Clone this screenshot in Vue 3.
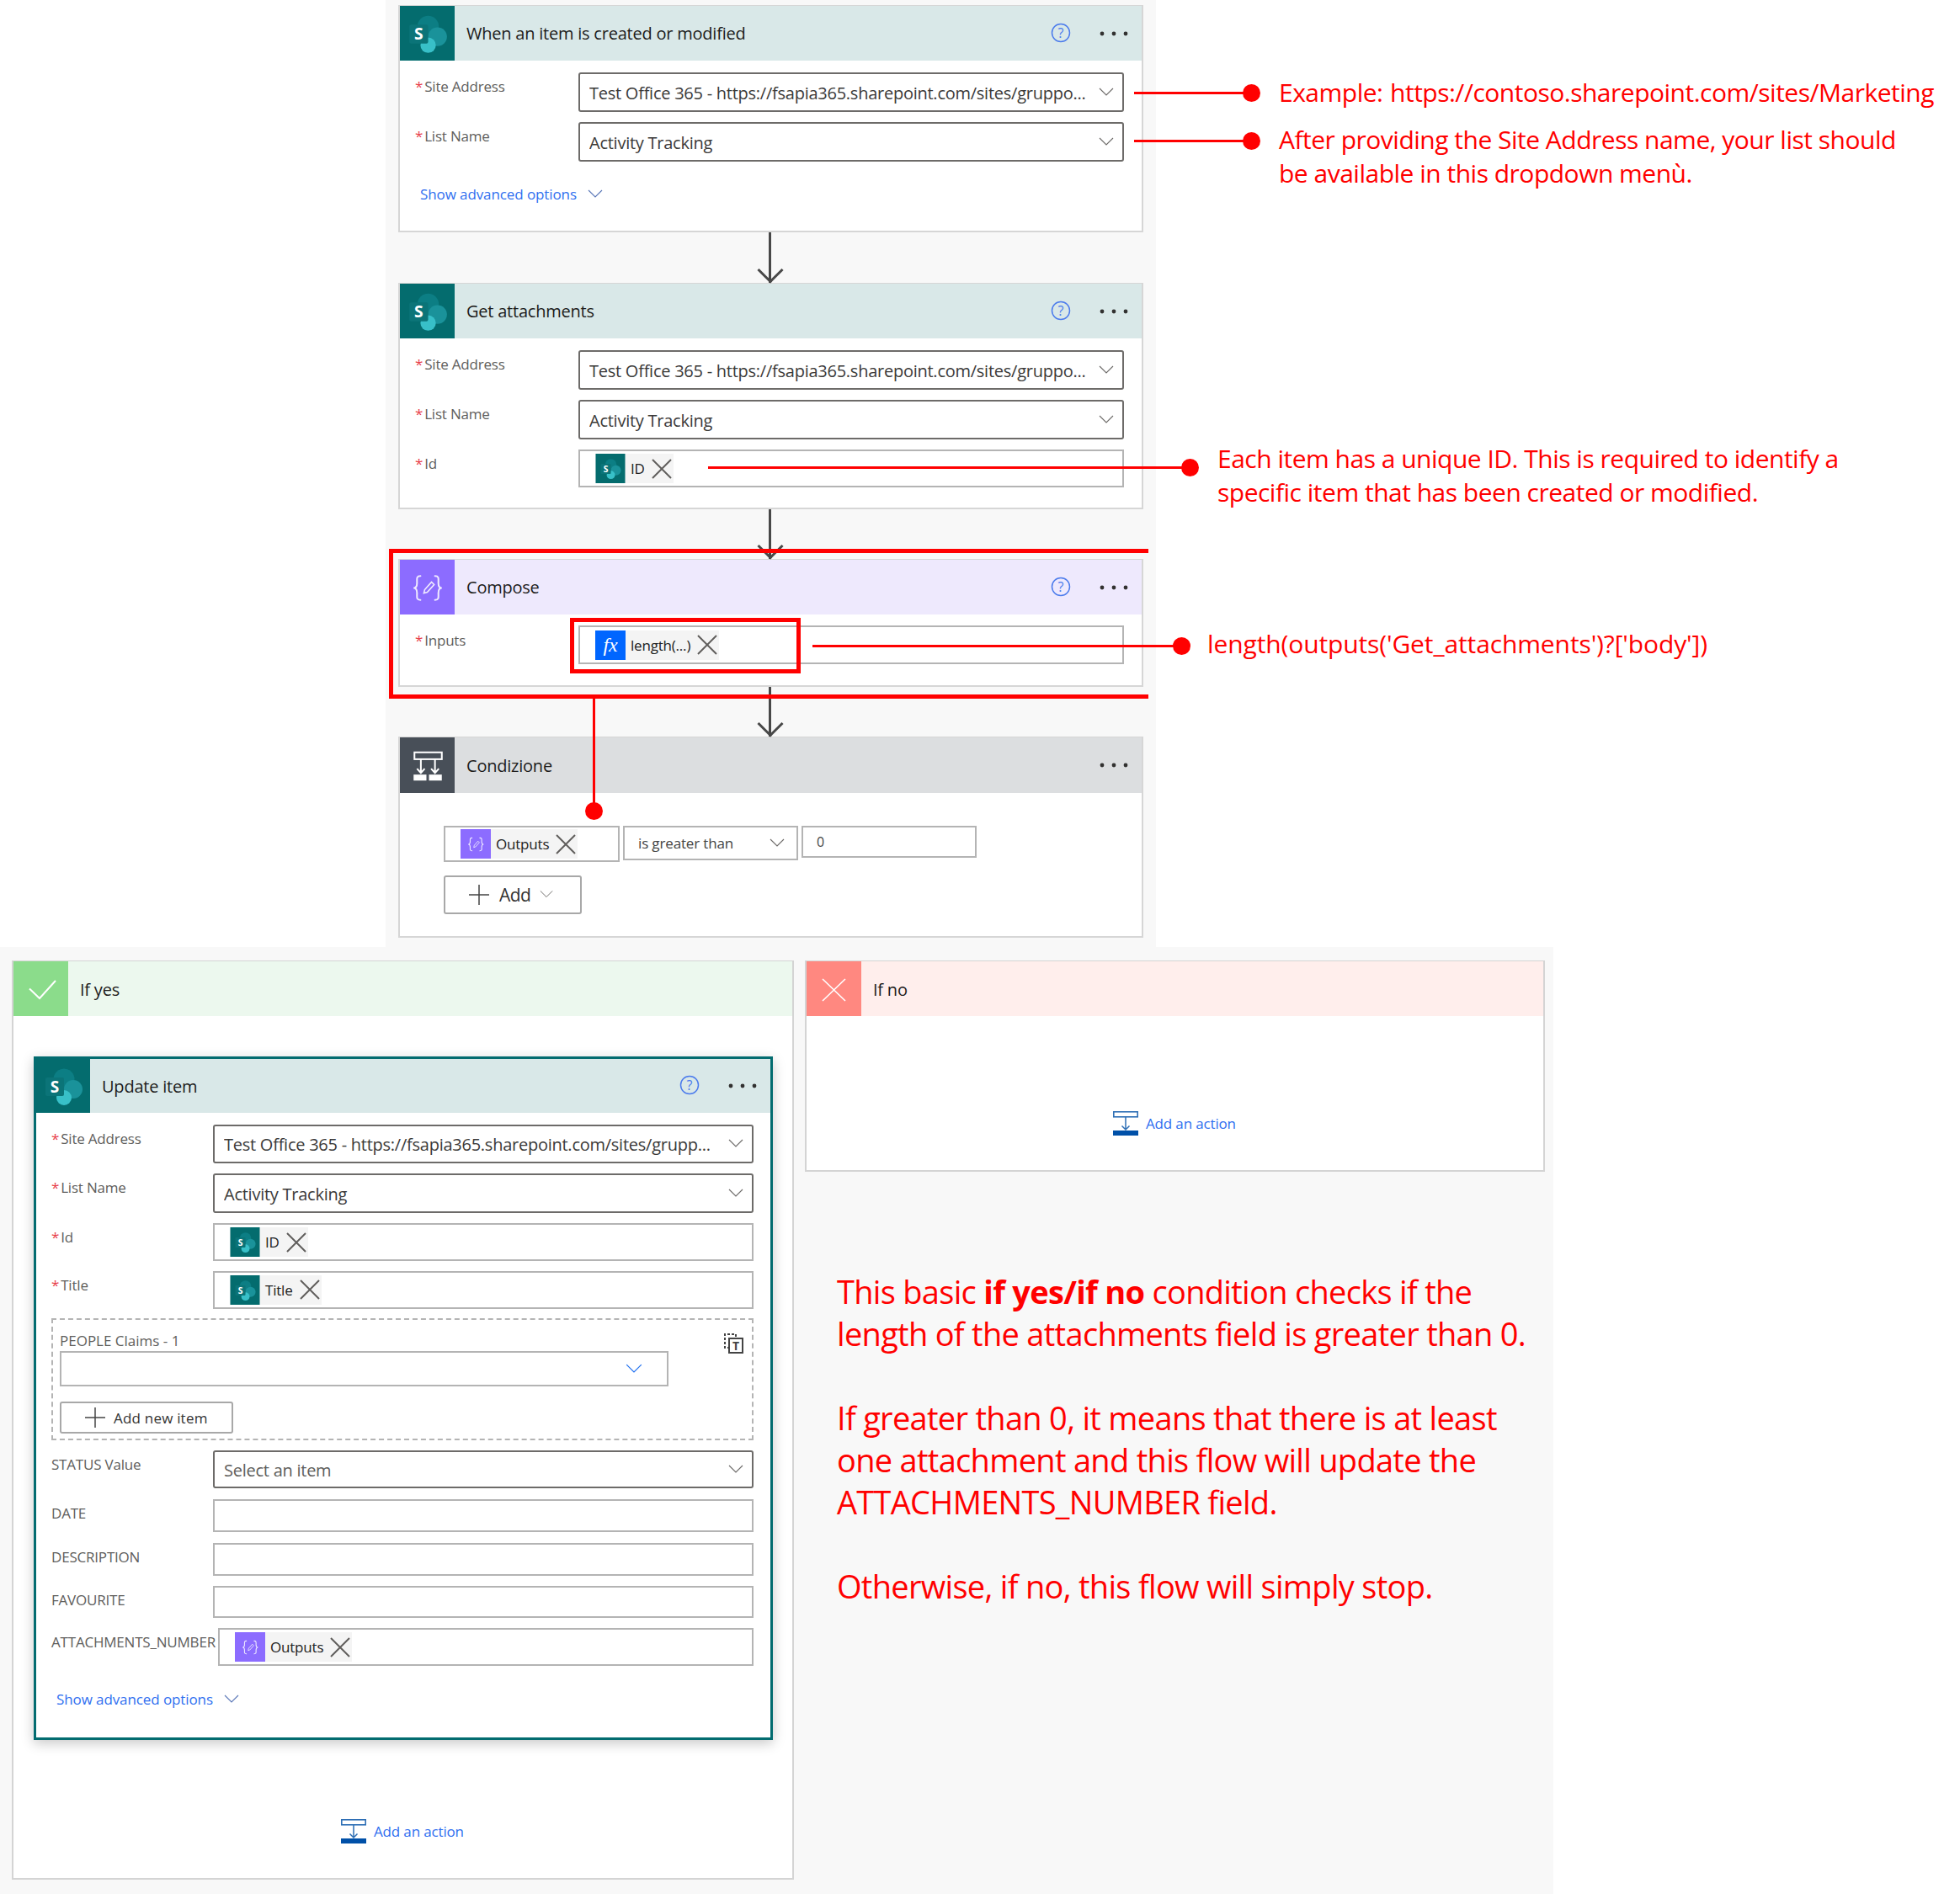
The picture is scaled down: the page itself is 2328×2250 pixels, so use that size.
<script setup>
const topRows = ['Site Address', 'List Name']
const siteUrl = 'Test Office 365 - https://fsapia365.sharepoint.com/sites/gruppo...'
</script>

<template>
  <div class="page">
    <svg class="defs" width="0" height="0">
      <defs>
        <symbol id="sp" viewBox="0 0 64 64">
          <rect width="64" height="64" fill="#046c6e" />
          <circle cx="33" cy="24" r="12.5" fill="#0c7e84" />
          <circle cx="44" cy="36" r="11" fill="#1a929a" />
          <circle cx="33" cy="46" r="9" fill="#38c0c8" />
          <rect x="11" y="22" width="22" height="22" rx="2" fill="#0b7478" />
          <text x="22" y="39.5" text-anchor="middle" font-family="Open Sans, sans-serif" font-size="19" font-weight="700" fill="#fff">S</text>
        </symbol>
        <symbol id="compose" viewBox="0 0 64 64">
          <g fill="none" stroke="#efeaff" stroke-width="2" stroke-linecap="round">
            <path d="M24 19c-5 0-4 3-4 8 0 4-1 6-4 6 3 0 4 2 4 6 0 5-1 8 4 8" />
            <path d="M41 19c5 0 4 3 4 8 0 4 1 6 4 6-3 0-4 2-4 6 0 5 1 8-4 8" />
            <path d="M28 39l1-4 8-9 3 3-8 9z" stroke-width="1.6" />
          </g>
        </symbol>
        <symbol id="cond" viewBox="0 0 64 64">
          <g fill="none" stroke="#fff" stroke-width="2">
            <rect x="17" y="17" width="32" height="8" />
            <path d="M24.5 25v16M41 25v16M20 36l4.500 5 4.500-5M36.500 36l4.500 5 4.500-5" />
          </g>
          <rect x="16" y="43" width="15" height="7" fill="#fff" />
          <rect x="34" y="43" width="15" height="7" fill="#fff" />
        </symbol>
        <symbol id="chev" viewBox="0 0 18 10">
          <path d="M1 1l8 8 8-8" fill="none" stroke="currentColor" stroke-width="1.1" />
        </symbol>
        <symbol id="cross" viewBox="0 0 24 24">
          <path d="M1 1l22 22M23 1L1 23" fill="none" stroke="#605e5c" stroke-width="2" />
        </symbol>
        <symbol id="plus" viewBox="0 0 24 24">
          <path d="M12 0v24M0 12h24" fill="none" stroke="#444" stroke-width="1.5" />
        </symbol>
        <symbol id="addact" viewBox="0 0 30 29">
          <rect x=".8" y=".8" width="28.4" height="6" fill="#fff" stroke="#2e6fb5" stroke-width="1.6" />
          <path d="M15 7v15M10.500 17.500l4.500 4.500 4.500-4.500" fill="none" stroke="#2e6fb5" stroke-width="1.5" />
          <rect y="23" width="30" height="6" fill="#0050a8" />
        </symbol>
        <symbol id="help" viewBox="0 0 24 24">
          <circle cx="12" cy="12" r="10.5" fill="none" stroke="#4b7bec" stroke-width="1.5" />
          <text x="12" y="18" text-anchor="middle" font-family="Open Sans, sans-serif" font-size="16" fill="#4b7bec">?</text>
        </symbol>
        <symbol id="dots" viewBox="0 0 34 6">
          <circle cx="3" cy="3" r="2.4" fill="#323130" />
          <circle cx="17" cy="3" r="2.4" fill="#323130" />
          <circle cx="31" cy="3" r="2.4" fill="#323130" />
        </symbol>
      </defs>
    </svg>

    <section class="top-panel">
      <article class="card">
        <header class="head head-sp">
          <svg class="head-icon"><use href="#sp" /></svg>
          <span class="title">When an item is created or modified</span>
          <svg class="help"><use href="#help" /></svg>
          <svg class="dots"><use href="#dots" /></svg>
        </header>
        <div class="body">
          <div v-for="(l, i) in topRows" :key="l" class="row">
            <label class="label"><i>*</i>{{ l }}</label>
            <div class="select">
              <span class="ellip">{{ i === 0 ? siteUrl : 'Activity Tracking' }}</span>
              <svg class="chev"><use href="#chev" /></svg>
            </div>
          </div>
          <div class="advanced">Show advanced options <svg class="chev adv-chev"><use href="#chev" /></svg></div>
        </div>
      </article>

      <div class="arrow arrow-long"></div>

      <article class="card card-attach">
        <header class="head head-sp">
          <svg class="head-icon"><use href="#sp" /></svg>
          <span class="title">Get attachments</span>
          <svg class="help"><use href="#help" /></svg>
          <svg class="dots"><use href="#dots" /></svg>
        </header>
        <div class="body">
          <div v-for="(l, i) in topRows" :key="l" class="row">
            <label class="label"><i>*</i>{{ l }}</label>
            <div class="select">
              <span class="ellip">{{ i === 0 ? siteUrl : 'Activity Tracking' }}</span>
              <svg class="chev"><use href="#chev" /></svg>
            </div>
          </div>
          <div class="row">
            <label class="label"><i>*</i>Id</label>
            <div class="input chip-input">
              <span class="chip">
                <svg class="chip-icon"><use href="#sp" /></svg>
                <span class="chip-text">ID</span>
                <svg class="chip-x"><use href="#cross" /></svg>
              </span>
            </div>
          </div>
        </div>
      </article>

      <div class="arrow"></div>

      <article class="card card-compose">
        <header class="head head-compose">
          <svg class="head-icon"><use href="#compose" /></svg>
          <span class="title">Compose</span>
          <svg class="help"><use href="#help" /></svg>
          <svg class="dots"><use href="#dots" /></svg>
        </header>
        <div class="body compose-body">
          <div class="row">
            <label class="label"><i>*</i>Inputs</label>
            <div class="input chip-input">
              <span class="chip">
                <span class="fx">fx</span>
                <span class="chip-text">length(...)</span>
                <svg class="chip-x"><use href="#cross" /></svg>
              </span>
            </div>
          </div>
        </div>
      </article>

      <div class="arrow"></div>

      <article class="card card-cond">
        <header class="head head-cond">
          <svg class="head-icon"><use href="#cond" /></svg>
          <span class="title">Condizione</span>
          <svg class="dots dots-only"><use href="#dots" /></svg>
        </header>
        <div class="cond-body">
          <div class="cond-row">
            <div class="input cond-chip">
              <span class="chip">
                <svg class="chip-icon chip-purple"><use href="#compose" /></svg>
                <span class="chip-text">Outputs</span>
                <svg class="chip-x"><use href="#cross" /></svg>
              </span>
            </div>
            <div class="input cond-op">
              <span>is greater than</span>
              <svg class="chev"><use href="#chev" /></svg>
            </div>
            <div class="input cond-val">0</div>
          </div>
          <button class="add-btn">
            <svg class="plus"><use href="#plus" /></svg>
            <span>Add</span>
            <svg class="chev add-chev"><use href="#chev" /></svg>
          </button>
        </div>
      </article>
    </section>

    <section class="bottom-panel">
      <article class="branch branch-yes">
        <header class="branch-head yes-head">
          <span class="branch-icon yes-icon">
            <svg width="65" height="65" viewBox="0 0 65 65"><path d="M19 32.500L31 44 50 23" fill="none" stroke="#fff" stroke-width="2" /></svg>
          </span>
          <span class="title">If yes</span>
        </header>
        <div class="yes-body">
          <article class="update">
            <header class="head head-sp update-head">
              <svg class="head-icon"><use href="#sp" /></svg>
              <span class="title">Update item</span>
              <svg class="help"><use href="#help" /></svg>
              <svg class="dots"><use href="#dots" /></svg>
            </header>
            <div class="update-body">
              <div class="u-row">
                <label class="label"><i>*</i>Site Address</label>
                <div class="select"><span class="ellip">Test Office 365 - https://fsapia365.sharepoint.com/sites/grupp...</span><svg class="chev"><use href="#chev" /></svg></div>
              </div>
              <div class="u-row u-list">
                <label class="label"><i>*</i>List Name</label>
                <div class="select"><span class="ellip">Activity Tracking</span><svg class="chev"><use href="#chev" /></svg></div>
              </div>
              <div class="u-row u-short">
                <label class="label"><i>*</i>Id</label>
                <div class="input chip-input">
                  <span class="chip">
                    <svg class="chip-icon"><use href="#sp" /></svg>
                    <span class="chip-text">ID</span>
                    <svg class="chip-x"><use href="#cross" /></svg>
                  </span>
                </div>
              </div>
              <div class="u-row u-short">
                <label class="label"><i>*</i>Title</label>
                <div class="input chip-input">
                  <span class="chip">
                    <svg class="chip-icon"><use href="#sp" /></svg>
                    <span class="chip-text">Title</span>
                    <svg class="chip-x"><use href="#cross" /></svg>
                  </span>
                </div>
              </div>
              <div class="people">
                <div class="people-main">
                  <div class="people-label">PEOPLE Claims - 1</div>
                  <div class="input people-input"><svg class="chev blue-chev"><use href="#chev" /></svg></div>
                  <button class="add-item">
                    <svg class="plus"><use href="#plus" /></svg>
                    <span>Add new item</span>
                  </button>
                </div>
                <svg class="copy-icon" viewBox="0 0 24 24">
                  <path d="M15 4V1H2v16h4" fill="none" stroke="#444" stroke-width="2" stroke-dasharray="3 2" />
                  <rect x="7" y="6" width="16" height="17" fill="#fff" stroke="#444" stroke-width="2" />
                  <text x="15" y="20" text-anchor="middle" font-family="Open Sans, sans-serif" font-size="14" font-weight="700" fill="#444">T</text>
                </svg>
              </div>
              <div class="u-row u-status">
                <label class="label">STATUS Value</label>
                <div class="select"><span class="ellip muted">Select an item</span><svg class="chev"><use href="#chev" /></svg></div>
              </div>
              <div class="u-row u-plain">
                <label class="label">DATE</label>
                <div class="input"></div>
              </div>
              <div class="u-row u-plain">
                <label class="label">DESCRIPTION</label>
                <div class="input"></div>
              </div>
              <div class="u-row u-plain u-fav">
                <label class="label">FAVOURITE</label>
                <div class="input"></div>
              </div>
              <div class="u-row u-attach">
                <label class="label attach-label">ATTACHMENTS_NUMBER</label>
                <div class="input chip-input">
                  <span class="chip">
                    <svg class="chip-icon chip-purple"><use href="#compose" /></svg>
                    <span class="chip-text">Outputs</span>
                    <svg class="chip-x"><use href="#cross" /></svg>
                  </span>
                </div>
              </div>
              <div class="advanced u-adv">Show advanced options <svg class="chev adv-chev"><use href="#chev" /></svg></div>
            </div>
          </article>
          <div class="add-action yes-action">
            <svg class="add-act-icon"><use href="#addact" /></svg>
            <span>Add an action</span>
          </div>
        </div>
      </article>

      <div class="right-col">
        <article class="branch branch-no">
          <header class="branch-head no-head">
            <span class="branch-icon no-icon">
              <svg width="65" height="65" viewBox="0 0 65 65"><path d="M19 21l27 26M46 21L19 47" fill="none" stroke="#fff" stroke-width="1.6" /></svg>
            </span>
            <span class="title">If no</span>
          </header>
          <div class="no-body">
            <div class="add-action">
              <svg class="add-act-icon"><use href="#addact" /></svg>
              <span>Add an action</span>
            </div>
          </div>
        </article>
        <div class="explain">
          <p>This basic <b>if yes/if no</b> condition checks if the<br />length of the attachments field is greater than 0.</p>
          <p>If greater than 0, it means that there is at least<br />one attachment and this flow will update the<br />ATTACHMENTS_NUMBER field.</p>
          <p>Otherwise, if no, this flow will simply stop.</p>
        </div>
      </div>
    </section>

    <!-- annotation layer drawn over the screenshot -->
    <div class="frame"></div>
    <div class="frame-inner"></div>
    <div class="rule r1"></div><div class="dot d1"></div>
    <div class="rule r2"></div><div class="dot d2"></div>
    <div class="rule r3"></div><div class="dot d3"></div>
    <div class="rule r4"></div><div class="dot d4"></div>
    <div class="vrule"></div><div class="dot d5"></div>
    <p class="note n1">Example:&nbsp; https://contoso.sharepoint.com/sites/Marketing</p>
    <p class="note n2">After providing the Site Address name, your list should<br />be available in this dropdown menù.</p>
    <p class="note n3">Each item has a unique ID. This is required to identify a<br />specific item that has been created or modified.</p>
    <p class="note n4">length(outputs('Get_attachments')?['body'])</p>
  </div>
</template>

<style>
html, body { margin: 0; background: #fff; }
</style>

<style scoped>
.page {
  position: relative;
  width: 2328px;
  height: 2250px;
  overflow: hidden;
  background: #fff;
  font-family: "Open Sans", "Noto Sans", sans-serif;
  color: #252423;
}
.defs { position: absolute; }
p { margin: 0; }

.top-panel {
  box-sizing: border-box;
  width: 915px;
  height: 1125px;
  margin-left: 458px;
  padding: 6px 0 0 15px;
  background: #f8f8f8;
}
.card {
  box-sizing: border-box;
  width: 885px;
  height: 270px;
  background: #fff;
  border: 2px solid #d6d6d6;
  border-top-width: 1px;
}
.card-attach { height: 269px; }
.card-compose { height: 152px; }
.card-cond { height: 239px; }
.arrow {
  position: relative;
  width: 3px;
  height: 59px;
  margin-left: 440px;
  background: #484848;
}
.arrow-long { height: 60px; }
.arrow::after {
  content: "";
  position: absolute;
  left: -9.5px;
  bottom: 4.5px;
  width: 19px;
  height: 19px;
  border-right: 3px solid #484848;
  border-bottom: 3px solid #484848;
  transform: rotate(45deg);
  transform-origin: center;
}
.head {
  display: flex;
  align-items: center;
  height: 65px;
}
.head-sp { background: #d9e8e8; }
.head-compose { background: #eee9fd; }
.head-cond { height: 66px; background: #dcdee0; }
.head-icon { flex: none; width: 65px; height: 65px; }
.head-compose .head-icon { background: #8c6cff; }
.head-cond .head-icon { height: 66px; background: #484f58; }
.title {
  margin-left: 14px;
  font-size: 20px;
  letter-spacing: -0.22px;
  color: #1d1c1b;
}
.help { flex: none; width: 24px; height: 24px; margin-left: auto; margin-top: -2px; }
.dots { flex: none; width: 34px; height: 6px; margin-left: 34px; margin-right: 16px; }
.dots-only { margin-left: auto; }

.body { padding: 14px 21px 0 18px; }
.compose-body { padding-top: 13px; }
.compose-body .input { height: 46px; }
.compose-body .label { padding-top: 7px; }
.row { display: flex; align-items: flex-start; margin-bottom: 12px; }
.label {
  flex: none;
  box-sizing: border-box;
  width: 194px;
  padding-top: 6px;
  font-size: 17px;
  line-height: 22px;
  letter-spacing: -0.2px;
  color: #605e5c;
  white-space: nowrap;
}
.label i { font-style: normal; color: #e8404a; margin-right: 2px; }
.select, .input {
  box-sizing: border-box;
  display: flex;
  align-items: center;
  flex: 1;
  min-width: 0;
  background: #fff;
}
.select {
  height: 47px;
  padding: 0 10px 0 11px;
  border: 2px solid #6d6b69;
  border-radius: 3px;
  font-size: 20px;
  letter-spacing: -0.25px;
  color: #3b3a39;
}
.ellip { flex: 1; white-space: nowrap; overflow: hidden; padding-top: 1px; }
.muted { color: #605e5c; }
.chev { flex: none; width: 18px; height: 10px; color: #6d6b69; margin-top: -2px; }
.input { height: 45px; border: 2px solid #b4b4b4; }

.chip-input { padding-left: 18px; }
.chip {
  display: inline-flex;
  align-items: center;
  height: 35px;
  padding-right: 2px;
  background: #f4f4f4;
  font-size: 17px;
  letter-spacing: -0.2px;
  color: #222;
}
.chip-icon { flex: none; width: 36px; height: 100%; }
.chip-purple { background: #8c6cff; }
.chip-text { margin: 0 8px 0 6px; }
.chip-x { flex: none; width: 24px; height: 24px; }
.fx {
  display: flex;
  align-items: center;
  justify-content: center;
  width: 36px;
  height: 100%;
  background: #0066ff;
  color: #fff;
  font-family: "Liberation Serif", serif;
  font-style: italic;
  font-size: 24px;
}

.advanced {
  display: flex;
  align-items: center;
  margin-top: 27px;
  padding-left: 6px;
  font-size: 17px;
  letter-spacing: -0.1px;
  color: #2f6ff0;
}
.advanced .adv-chev { margin-left: 13px; color: #5b78b8; }

.cond-body { padding: 39px 0 0 52px; }
.cond-row { display: flex; align-items: flex-start; gap: 4px; }
.cond-chip { flex: none; width: 209px; height: 43px; padding-left: 18px; }
.cond-op {
  flex: none;
  width: 208px;
  height: 41px;
  justify-content: space-between;
  padding: 0 14px 0 16px;
  font-size: 17px;
  letter-spacing: -0.15px;
  color: #444;
}
.cond-val {
  flex: none;
  width: 208px;
  height: 38px;
  padding-left: 16px;
  font-size: 16px;
  color: #444;
}
.add-btn, .add-item {
  display: flex;
  align-items: center;
  box-sizing: border-box;
  background: #fff;
  border: 2px solid #a8a8a8;
  border-radius: 3px;
  font-family: inherit;
  color: #333;
}
.add-btn {
  width: 164px;
  height: 46px;
  margin-top: 16px;
  padding: 0 0 0 28px;
  font-size: 21px;
  letter-spacing: -0.6px;
}
.plus { flex: none; width: 24px; height: 24px; margin-right: 12px; }
.add-chev { margin-left: 11px; width: 16px; }

.bottom-panel {
  box-sizing: border-box;
  display: flex;
  align-items: flex-start;
  width: 1845px;
  height: 1125px;
  padding: 16px 0 0 14px;
  background: #f8f8f8;
}
.branch {
  box-sizing: border-box;
  background: #fff;
  border: 2px solid #d4d4d4;
  border-top-width: 1px;
}
.branch-yes { width: 929px; height: 1092px; flex: none; }
.branch-head { display: flex; align-items: center; height: 65px; }
.branch-head .title { padding-top: 2px; }
.branch-icon { flex: none; width: 65px; height: 65px; }
.branch-icon svg { display: block; }
.yes-head { background: #ecf8ee; }
.yes-icon { background: #8bdc8b; }
.no-head { background: #ffeeec; }
.no-icon { background: #ff8880; }

.yes-body { padding: 48px 0 0 24px; }
.update {
  box-sizing: border-box;
  width: 878px;
  height: 812px;
  background: #fff;
  border: 3px solid #036c70;
  box-shadow: 0 4px 14px rgba(0, 0, 0, .22);
}
.update-head { height: 64px; }
.update-head .head-icon { width: 64px; height: 64px; }
.update-body { padding: 14px 20px 0 18px; }
.update-body .select { height: 46px; }
.update-body .u-list .select { height: 47px; }
.u-row { display: flex; align-items: flex-start; margin-bottom: 12px; }
.u-row .label { width: 192px; }
.u-short { margin-bottom: 11.5px; }
.u-status { margin-bottom: 13px; }
.update-body .u-status .select { height: 45px; }
.u-plain { margin-bottom: 12.5px; }
.u-plain .input { height: 39px; }
.u-fav { margin-bottom: 12px; }
.u-fav .input { height: 38px; }
.u-row .attach-label { width: 198px; }

.people {
  box-sizing: border-box;
  display: flex;
  justify-content: space-between;
  width: 834px;
  height: 145px;
  margin-bottom: 12px;
  padding: 16px 10px 0 8px;
  border: 2px dashed #b4b4b4;
}
.people-main { flex: 1; }
.people-label {
  font-size: 17px;
  line-height: 18px;
  color: #605e5c;
}
.people-input {
  width: 723px;
  height: 42px;
  margin-top: 3px;
  padding-right: 29px;
  justify-content: flex-end;
  flex: none;
}
.blue-chev { color: #1f6ff0; width: 20px; height: 11px; }
.add-item {
  width: 206px;
  height: 38px;
  margin-top: 18px;
  padding: 0 0 0 28px;
  font-size: 17px;
  letter-spacing: 0.2px;
}
.add-item .plus { margin-right: 10px; }
.copy-icon { flex: none; width: 24px; height: 24px; }

.advanced.u-adv { margin-top: 28px; padding-left: 6px; }
.add-action {
  display: flex;
  align-items: center;
  gap: 9px;
  font-size: 17px;
  letter-spacing: -0.15px;
  color: #2f6ff0;
}
.add-act-icon { flex: none; width: 30px; height: 29px; }
.yes-action { margin: 94px 0 0 365px; }

.right-col { margin-left: 13px; width: 879px; flex: none; }
.branch-no { height: 251px; }
.no-body { padding: 113px 0 0 364px; }
.explain {
  margin: 117px 0 0 38px;
  font-size: 38px;
  line-height: 50px;
  letter-spacing: -0.7px;
  color: #f00;
  white-space: nowrap;
}
.explain p { margin-bottom: 50px; }

.frame {
  position: absolute;
  left: 462px;
  top: 652px;
  width: 902px;
  height: 178px;
  box-sizing: border-box;
  border: solid #f00;
  border-width: 5px 0 5px 5px;
}
.frame-inner {
  position: absolute;
  left: 677px;
  top: 734px;
  width: 274px;
  height: 66px;
  box-sizing: border-box;
  border: 5px solid #f00;
}
.rule { position: absolute; height: 3px; background: #f00; }
.r1 { left: 1347px; top: 109px; width: 140px; }
.r2 { left: 1347px; top: 166px; width: 140px; }
.r3 { left: 841px; top: 554px; width: 572px; }
.r4 { left: 965px; top: 766px; width: 438px; }
.dot { position: absolute; width: 21px; height: 21px; border-radius: 50%; background: #f00; }
.d1 { left: 1476px; top: 100px; }
.d2 { left: 1476px; top: 157px; }
.d3 { left: 1403px; top: 545px; }
.d4 { left: 1393px; top: 757px; }
.d5 { left: 695px; top: 953px; }
.vrule { position: absolute; left: 704px; top: 830px; width: 3px; height: 133px; background: #f00; }
.note {
  position: absolute;
  font-size: 30px;
  line-height: 40px;
  letter-spacing: -0.5px;
  color: #f00;
  white-space: nowrap;
}
.n1 { left: 1519px; top: 90px; word-spacing: -3px; }
.n2 { left: 1519px; top: 146px; }
.n3 { left: 1446px; top: 525px; }
.n4 { left: 1434px; top: 745px; letter-spacing: -0.12px; }
</style>
